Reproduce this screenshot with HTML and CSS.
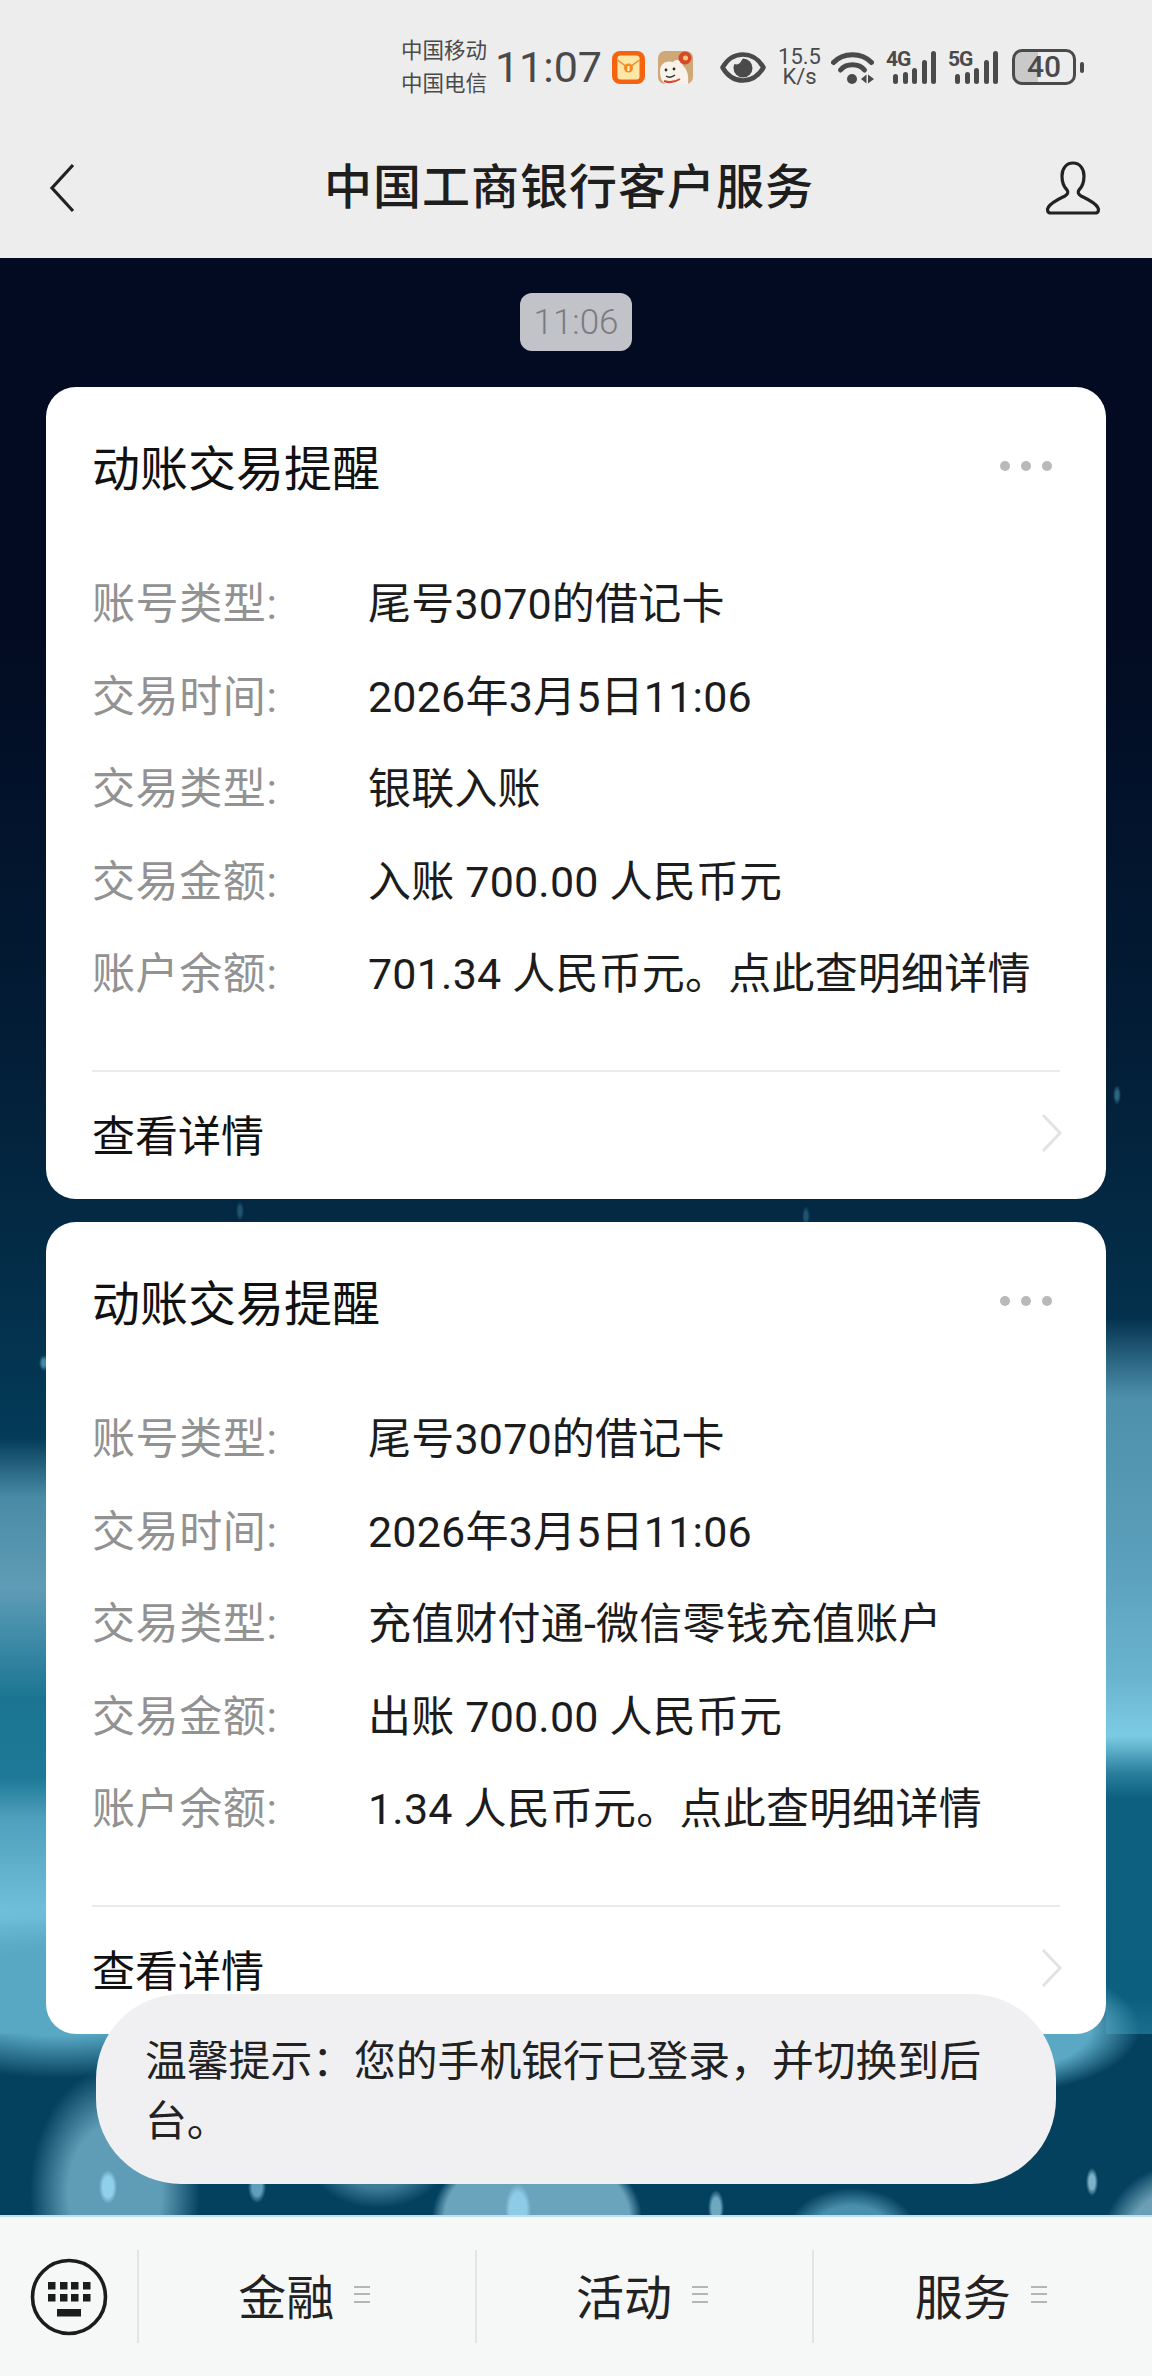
FILE: index.html
```html
<!DOCTYPE html>
<html lang="zh-CN">
<head>
    <meta charset="UTF-8">
    <meta name="viewport" content="width=device-width, initial-scale=1.0">
    <title>中国工商银行客户服务</title>
    <link rel="stylesheet" href="styles.css">
</head>
<body>
    <div class="screen">
        <header class="top-bar">
            <div class="status">
                <div class="carrier">
                    <span>中国移动</span>
                    <span>中国电信</span>
                </div>
                <span class="clock">11:07</span>
                <svg class="app-icon" width="33" height="33" viewBox="0 0 33 33">
                    <rect width="33" height="33" rx="8" fill="#f4640f"/>
                    <rect x="5.5" y="4.5" width="22" height="24" rx="3" fill="#fde6a6"/>
                    <path d="M5.5 9 L16.5 17 L27.5 9" fill="none" stroke="#ee8a2c" stroke-width="1.5"/>
                    <circle cx="16.5" cy="17" r="4.5" fill="#f58a1f"/>
                    <rect x="15.5" y="15" width="2" height="5" fill="#fff3c8"/>
                </svg>
                <svg class="app-icon dog" width="35" height="33" viewBox="0 0 35 33">
                    <rect width="35" height="33" rx="7" fill="#cfa877"/>
                    <path d="M2 20 C2 12 9 9 15 11 C18 7 24 9 25 15 C29 18 31 24 30 33 L7 33 C3 29 2 25 2 20 Z" fill="#f8f3ea"/>
                    <circle cx="27" cy="7" r="6.5" fill="#d9472b"/>
                    <circle cx="27.5" cy="7" r="2.5" fill="#f0c77a"/>
                    <circle cx="8" cy="19" r="1.4" fill="#2b2b2b"/>
                    <circle cx="16" cy="18" r="1.4" fill="#2b2b2b"/>
                    <path d="M8 25 Q12 28 17 24" fill="none" stroke="#2b2b2b" stroke-width="1.4"/>
                    <path d="M6 30 Q14 33 22 28" fill="none" stroke="#d9472b" stroke-width="2"/>
                </svg>
                <svg class="eye" width="46" height="31" viewBox="0 0 46 31">
                    <path d="M2.5 15.5 C8 6 15 2.5 23 2.5 C31 2.5 38 6 43.5 15.5 C38 25 31 28.5 23 28.5 C15 28.5 8 25 2.5 15.5 Z" fill="none" stroke="#4a4a4a" stroke-width="4.5" stroke-linejoin="round"/>
                    <path d="M23 6.5 A9.5 9.5 0 1 1 13.5 16 C13.5 14.5 14 13 14.6 12 A5 5 0 0 0 21 9.5 C21.5 8.5 22 7.5 23 6.5 Z" fill="#4a4a4a"/>
                </svg>
                <div class="speed">
                    <span>15.5</span>
                    <span>K/s</span>
                </div>
                <svg class="wifi" width="43" height="33" viewBox="0 0 43 33">
                    <path d="M2.5 11.5 C12 1 31 1 40.500 11.5" fill="none" stroke="#4a4a4a" stroke-width="5" stroke-linecap="round"/>
                    <path d="M9.500 19 C15 12 28 12 33.500 19" fill="none" stroke="#4a4a4a" stroke-width="5" stroke-linecap="round"/>
                    <circle cx="21" cy="28" r="5" fill="#4a4a4a"/>
                    <path d="M30 28 L35.500 23.500 L35.500 32.500 Z M37 23.500 L43 28 L37 32.500 Z" fill="#4a4a4a"/>
                </svg>
                <div class="signal">
                    <span class="net">4G</span>
                    <i class="bar b1"></i><i class="bar b2"></i><i class="bar b3"></i><i class="bar b4"></i><i class="bar b5"></i>
                </div>
                <div class="signal">
                    <span class="net">5G</span>
                    <i class="bar b1"></i><i class="bar b2"></i><i class="bar b3"></i><i class="bar b4"></i><i class="bar b5"></i>
                </div>
                <div class="battery">
                    <div class="battery-body">40</div>
                    <i class="battery-tip"></i>
                </div>
            </div>
            <nav class="nav">
                <svg class="nav-icon" width="26" height="50" viewBox="0 0 26 50">
                    <path d="M24 2 L3 25 L24 48" fill="none" stroke="#222" stroke-width="3.2"/>
                </svg>
                <h1 class="nav-title">中国工商银行客户服务</h1>
                <svg class="nav-icon" width="56" height="54" viewBox="0 0 56 54">
                    <path d="M28 2 C21 2 17 8 17 15 C17 22 19 26 22 29 C23.500 31 23 33 20 35 C14 38 7 41 3.500 46 C1.500 49 2.500 52 6 52 L50 52 C53.500 52 54.500 49 52.500 46 C49 41 42 38 36 35 C33 33 32.500 31 34 29 C37 26 39 22 39 15 C39 8 35 2 28 2 Z" fill="none" stroke="#222" stroke-width="3.2" stroke-linejoin="round"/>
                </svg>
            </nav>
        </header>

        <main class="chat">
            <div class="time-row"><span class="time-pill">11:06</span></div>

            <section class="card">
                <div class="card-head">
                    <h2 class="card-title">动账交易提醒</h2>
                    <div class="dots"><i></i><i></i><i></i></div>
                </div>
                <div class="card-rows">
                    <div class="row"><span class="row-label">账号类型:</span><span class="row-value">尾号3070的借记卡</span></div>
                    <div class="row"><span class="row-label">交易时间:</span><span class="row-value">2026年3月5日11:06</span></div>
                    <div class="row"><span class="row-label">交易类型:</span><span class="row-value">银联入账</span></div>
                    <div class="row"><span class="row-label">交易金额:</span><span class="row-value">入账 700.00 人民币元</span></div>
                    <div class="row"><span class="row-label">账户余额:</span><span class="row-value">701.34 人民币元。点此查明细详情</span></div>
                </div>
                <div class="card-foot">
                    <span>查看详情</span>
                    <svg width="22" height="38" viewBox="0 0 22 38">
                        <path d="M2 1 L19 19 L2 37" fill="none" stroke="#e3e3e3" stroke-width="3"/>
                    </svg>
                </div>
            </section>

            <section class="card">
                <div class="card-head">
                    <h2 class="card-title">动账交易提醒</h2>
                    <div class="dots"><i></i><i></i><i></i></div>
                </div>
                <div class="card-rows">
                    <div class="row"><span class="row-label">账号类型:</span><span class="row-value">尾号3070的借记卡</span></div>
                    <div class="row"><span class="row-label">交易时间:</span><span class="row-value">2026年3月5日11:06</span></div>
                    <div class="row"><span class="row-label">交易类型:</span><span class="row-value">充值财付通-微信零钱充值账户</span></div>
                    <div class="row"><span class="row-label">交易金额:</span><span class="row-value">出账 700.00 人民币元</span></div>
                    <div class="row"><span class="row-label">账户余额:</span><span class="row-value">1.34 人民币元。点此查明细详情</span></div>
                </div>
                <div class="card-foot">
                    <span>查看详情</span>
                    <svg width="22" height="38" viewBox="0 0 22 38">
                        <path d="M2 1 L19 19 L2 37" fill="none" stroke="#e3e3e3" stroke-width="3"/>
                    </svg>
                </div>
            </section>

            <div class="toast">温馨提示：您的手机银行已登录，并切换到后台。</div>
        </main>

        <footer class="tabbar">
            <div class="tab-keyboard">
                <svg width="78" height="78" viewBox="0 0 78 78">
                    <circle cx="39" cy="39" r="36.500" fill="none" stroke="#1c1c1c" stroke-width="3.600"/>
                    <g fill="#1c1c1c">
                        <rect x="18" y="24" width="7.500" height="7.500"/><rect x="30" y="24" width="7.500" height="7.500"/><rect x="41" y="24" width="7.500" height="7.500"/><rect x="53" y="24" width="7.500" height="7.500"/>
                        <rect x="18" y="36" width="7.500" height="7.500"/><rect x="30" y="36" width="7.500" height="7.500"/><rect x="41" y="36" width="7.500" height="7.500"/><rect x="53" y="36" width="7.500" height="7.500"/>
                        <rect x="27" y="51" width="24" height="7.500"/>
                    </g>
                </svg>
            </div>
            <div class="tab"><span>金融</span><div class="tab-menu"><i></i><i></i><i></i></div></div>
            <div class="tab"><span>活动</span><div class="tab-menu"><i></i><i></i><i></i></div></div>
            <div class="tab"><span>服务</span><div class="tab-menu"><i></i><i></i><i></i></div></div>
        </footer>
    </div>
</body>
</html>
```

FILE: styles.css
```css
* {
    box-sizing: border-box;
}
body {
    margin: 0;
    padding: 0;
    font-family: Roboto, "Noto Sans CJK SC", sans-serif;
    color: #1a1a1a;
    overflow: hidden;
}
h1, h2 {
    margin: 0;
    font-weight: 400;
}
.screen {
    width: 1152px;
    height: 2376px;
    display: flex;
    flex-direction: column;
}

/* status bar */
.top-bar {
    height: 258px;
    flex: none;
    background-color: #ededed;
}
.status {
    height: 110px;
    padding: 24px 68px 0 0;
    display: flex;
    justify-content: flex-end;
    align-items: center;
    color: #4a4a4a;
}
.carrier {
    display: flex;
    flex-direction: column;
    gap: 1px;
    font-size: 21.5px;
    line-height: 32px;
    margin-right: 8px;
}
.clock {
    font-size: 43px;
    line-height: 50px;
    margin-right: 10px;
}
.app-icon {
    margin-right: 13px;
}
.app-icon.dog {
    margin-right: 27px;
}
.eye {
    margin-right: 12px;
}
.speed {
    width: 43px;
    display: flex;
    flex-direction: column;
    align-items: center;
    font-size: 22px;
    line-height: 20px;
    margin-right: 10px;
}
.wifi {
    margin-right: 12px;
}
.signal {
    width: 50px;
    height: 34px;
    position: relative;
    display: flex;
    justify-content: flex-end;
    align-items: flex-end;
    gap: 4.400px;
    margin-right: 12px;
}
.net {
    position: absolute;
    left: 0;
    top: -1px;
    font-size: 21px;
    line-height: 20px;
    font-weight: 700;
    letter-spacing: -1px;
}
.bar {
    width: 5px;
    border-radius: 2.500px;
    background-color: #4a4a4a;
}
.b1 { height: 10px; }
.b2 { height: 12px; }
.b3 { height: 16px; }
.b4 { height: 24px; }
.b5 { height: 33px; }
.battery {
    display: flex;
    align-items: center;
    gap: 4px;
    margin-left: 2px;
}
.battery-body {
    width: 64px;
    height: 36px;
    border: 3px solid #4a4a4a;
    border-radius: 10px;
    background: linear-gradient(90deg, #c9c9c9 23px, transparent 23px);
    font-size: 30px;
    line-height: 30px;
    font-weight: 500;
    text-align: center;
}
.battery-tip {
    width: 4px;
    height: 11px;
    border-radius: 2px;
    background-color: #4a4a4a;
}

/* title bar */
.nav {
    height: 148px;
    padding: 0 51px 2px 49px;
    display: flex;
    justify-content: space-between;
    align-items: center;
}
.nav-icon {
    margin-top: 10px;
}
.nav-title {
    font-size: 48px;
    font-weight: 500;
    color: #1e1e1e;
    letter-spacing: 1px;
    margin-left: 18px;
}

/* messages */
.chat {
    flex: 1;
    position: relative;
    padding: 35px 46px 0;
    background-color: #04405e;
    background-repeat: no-repeat;
    background-image:
        radial-gradient(ellipse 9px 17px at 108px 1929px, #8fd0ea 60%, transparent 100%),
        radial-gradient(ellipse 9px 16px at 257px 1929px, #5f9fba 55%, transparent 100%),
        radial-gradient(ellipse 13px 26px at 518px 1952px, #8dcbe6 65%, transparent 100%),
        radial-gradient(ellipse 8px 18px at 716px 1950px, #6ea8c0 55%, transparent 100%),
        radial-gradient(ellipse 6px 14px at 1092px 1924px, #7db3c9 50%, transparent 100%),
        radial-gradient(ellipse 4px 10px at 1117px 837px, #2a6580 40%, transparent 100%),
        radial-gradient(ellipse 4px 10px at 240px 953px, #1f5470 40%, transparent 100%),
        radial-gradient(ellipse 4px 10px at 806px 958px, #1f5470 40%, transparent 100%),
        radial-gradient(ellipse 5px 8px at 44px 1105px, #3f8aa6 40%, transparent 100%),
        radial-gradient(ellipse 65px 45px at 852px 1975px, #4a90ae 60%, transparent 100%),
        radial-gradient(ellipse 85px 85px at 1185px 1990px, #6a9fb5 70%, transparent 100%),
        radial-gradient(ellipse 105px 75px at 537px 1960px, #6aa3bc 88%, transparent 100%),
        radial-gradient(ellipse 70px 50px at 378px 1900px, #3f7c98 60%, transparent 100%),
        radial-gradient(ellipse 85px 125px at 115px 1935px, #5f9db6 55%, transparent 100%),
        radial-gradient(ellipse 140px 65px at 1000px 1770px, #5aa8c4 65%, transparent 100%),
        radial-gradient(ellipse 210px 85px at 60px 1735px, #58a8c4 50%, transparent 100%),
        linear-gradient(180deg, transparent 1060px, #4e90ac 1140px, #5a9fbb 1300px, #6ab4d0 1420px, #7ccbe4 1478px, #2a7f9e 1515px, #0e6080 1540px, #0d5f7f 1740px, #1a6d8c 1776px),
        linear-gradient(180deg, transparent 1180px, #4a8ba6 1240px, #5f9cb5 1330px, #3f8ba8 1380px, #1b7592 1440px, #1d7997 1520px, #4fa0bc 1560px, #72c1dc 1660px, #5aa9c6 1730px, #4a9ab6 1776px),
        linear-gradient(180deg, #020b22 0, #020b22 380px, #031d36 780px, #032c47 1000px, #04415f 1250px, #04415f 1957px);
    background-size:
        100% 100%, 100% 100%, 100% 100%, 100% 100%, 100% 100%,
        100% 100%, 100% 100%, 100% 100%, 100% 100%, 100% 100%,
        100% 100%, 100% 100%, 100% 100%, 100% 100%, 100% 100%,
        100% 100%,
        46px 1776px, 46px 1776px,
        100% 100%;
    background-position:
        0 0, 0 0, 0 0, 0 0, 0 0,
        0 0, 0 0, 0 0, 0 0, 0 0,
        0 0, 0 0, 0 0, 0 0, 0 0,
        0 0,
        1106px 0, 0 0,
        0 0;
}
.time-row {
    height: 58px;
    margin-bottom: 36px;
    display: flex;
    justify-content: center;
}
.time-pill {
    width: 112px;
    border-radius: 12px;
    background-color: #c1c3c9;
    color: #7a7c82;
    font-size: 35px;
    font-weight: 300;
    line-height: 60px;
    text-align: center;
}
.card {
    height: 812px;
    padding: 0 46px;
    margin-bottom: 23px;
    border-radius: 30px;
    background-color: #fff;
}
.card-head {
    height: 162px;
    padding-bottom: 6px;
    display: flex;
    justify-content: space-between;
    align-items: center;
}
.card-title {
    font-size: 48px;
    color: #111;
}
.dots {
    display: flex;
    gap: 11px;
    padding-top: 2px;
    margin-right: 8px;
}
.dots i {
    width: 10px;
    height: 10px;
    border-radius: 50%;
    background-color: #b9b9b9;
}
.card-rows {
    height: 523px;
    padding-top: 5px;
    border-bottom: 2px solid #ebebeb;
}
.row {
    height: 92.500px;
    display: flex;
    align-items: center;
    font-size: 43px;
}
.row-label {
    width: 276px;
    color: #929292;
    letter-spacing: .6px;
}
.row-value {
    color: #1c1c1c;
    letter-spacing: .2px;
}
.card-foot {
    height: 125px;
    padding-bottom: 3px;
    display: flex;
    justify-content: space-between;
    align-items: center;
    font-size: 43px;
    color: #111;
}
.card-foot svg {
    margin-right: -3px;
}
.toast {
    position: absolute;
    left: 96px;
    top: 1736px;
    width: 960px;
    height: 190px;
    padding: 38px 50px 0 49px;
    border-radius: 85px;
    background-color: #f0f0f3;
    font-size: 41.8px;
    line-height: 60px;
    color: #222;
}

/* bottom menu */
.tabbar {
    height: 161px;
    flex: none;
    display: flex;
    align-items: center;
    background-color: #f6f7f7;
    border-top: 2px solid #bfe0ec;
}
.tab-keyboard {
    width: 139px;
    height: 93px;
    padding-left: 30px;
    display: flex;
    align-items: center;
    border-right: 2px solid #e4e4e4;
}
.tab {
    width: 338px;
    height: 93px;
    display: flex;
    justify-content: center;
    align-items: center;
    gap: 20px;
    padding: 0 5px 5px 0;
    font-size: 48px;
    color: #222;
    border-right: 2px solid #e4e4e4;
}
.tab:last-child {
    border-right: none;
}
.tab-menu {
    width: 16px;
    display: flex;
    flex-direction: column;
    gap: 5.500px;
}
.tab-menu i {
    height: 2px;
    background-color: #b5b5b5;
}
```
